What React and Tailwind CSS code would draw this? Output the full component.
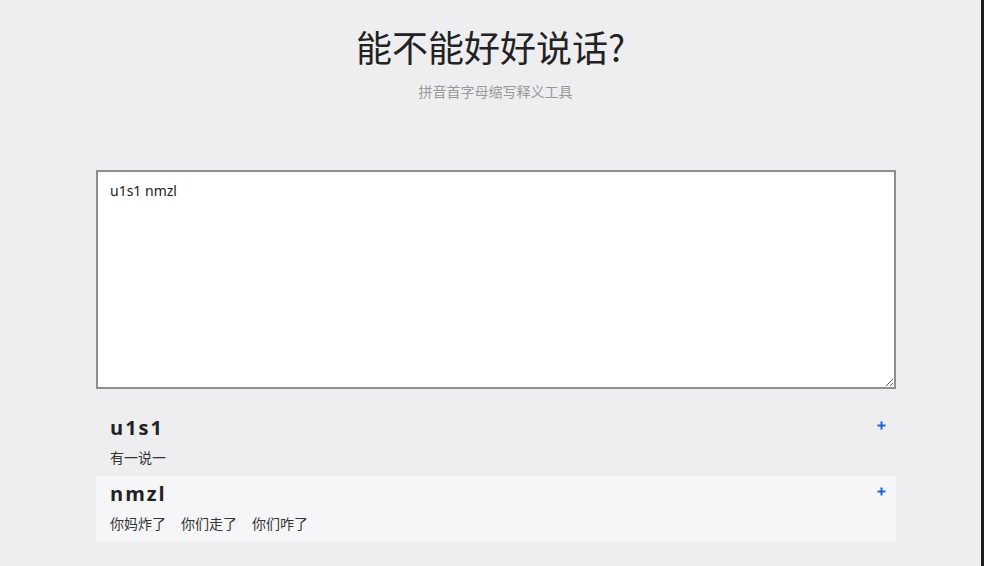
import React from 'react';

const cjk = { fontFamily: '"Noto Sans CJK SC", "Noto Sans", sans-serif' };

const Entries = [
  { abbr: 'u1s1', meanings: ['有一说一'] },
  { abbr: 'nmzl', meanings: ['你妈炸了', '你们走了', '你们咋了'] },
];

const Entry = ({ item, shaded }) => (
  <div
    className={`px-[14px] pt-[4px] pb-[9px] ${shaded ? 'bg-[#f6f6f8]' : ''}`}
  >
    <div className="flex items-start justify-between">
      <h4
        className="text-[20px] leading-[28px] font-bold tracking-[2px] text-[#222]"
        style={{ fontFamily: '"Open Sans", "Noto Sans", sans-serif' }}
      >
        {item.abbr}
      </h4>
      {/* add button */}
      <button className="mt-[7px] mr-[-4px] text-[#1a66d6]">
        <svg width="9" height="9" viewBox="0 0 9 9">
          <path d="M4.5 0.5v8M0.5 4.5h8" stroke="currentColor" strokeWidth="2" />
        </svg>
      </button>
    </div>
    <div className="mt-[5px] flex gap-[15px] text-[14px] leading-[20px] text-[#333]" style={cjk}>
      {item.meanings.map((m) => (
        <span key={m}>{m}</span>
      ))}
    </div>
  </div>
);

export default function App() {
  return (
    <div className="flex min-h-[566px] w-full bg-[#eeeef0]">
      <div className="flex flex-1 flex-col">
        <h1
          className="mt-[22px] text-center text-[36px] leading-[48px] font-normal text-[#222]"
          style={cjk}
        >
          能不能好好说话?
        </h1>
        <p
          className="mt-[11px] pl-[10px] text-center text-[14px] leading-[20px] text-[#999]"
          style={cjk}
        >
          拼音首字母缩写释义工具
        </p>

        <div className="ml-[96px] mt-[69px] w-[800px]">
          <textarea
            defaultValue="u1s1 nmzl"
            spellCheck={false}
            className="block h-[219px] w-full resize-y border-2 border-[#8f8f8f] bg-white px-[12px] py-[9px] text-[14px] leading-[20px] text-[#222] outline-none"
            style={{ fontFamily: '"Noto Sans", "DejaVu Sans", sans-serif' }}
          />

          <div className="mt-[21px]">
            {Entries.map((item, i) => (
              <Entry key={item.abbr} item={item} shaded={i % 2 === 1} />
            ))}
          </div>
        </div>
      </div>
      <div className="w-[3px] shrink-0 bg-[#1c1c1c]" />
    </div>
  );
}
